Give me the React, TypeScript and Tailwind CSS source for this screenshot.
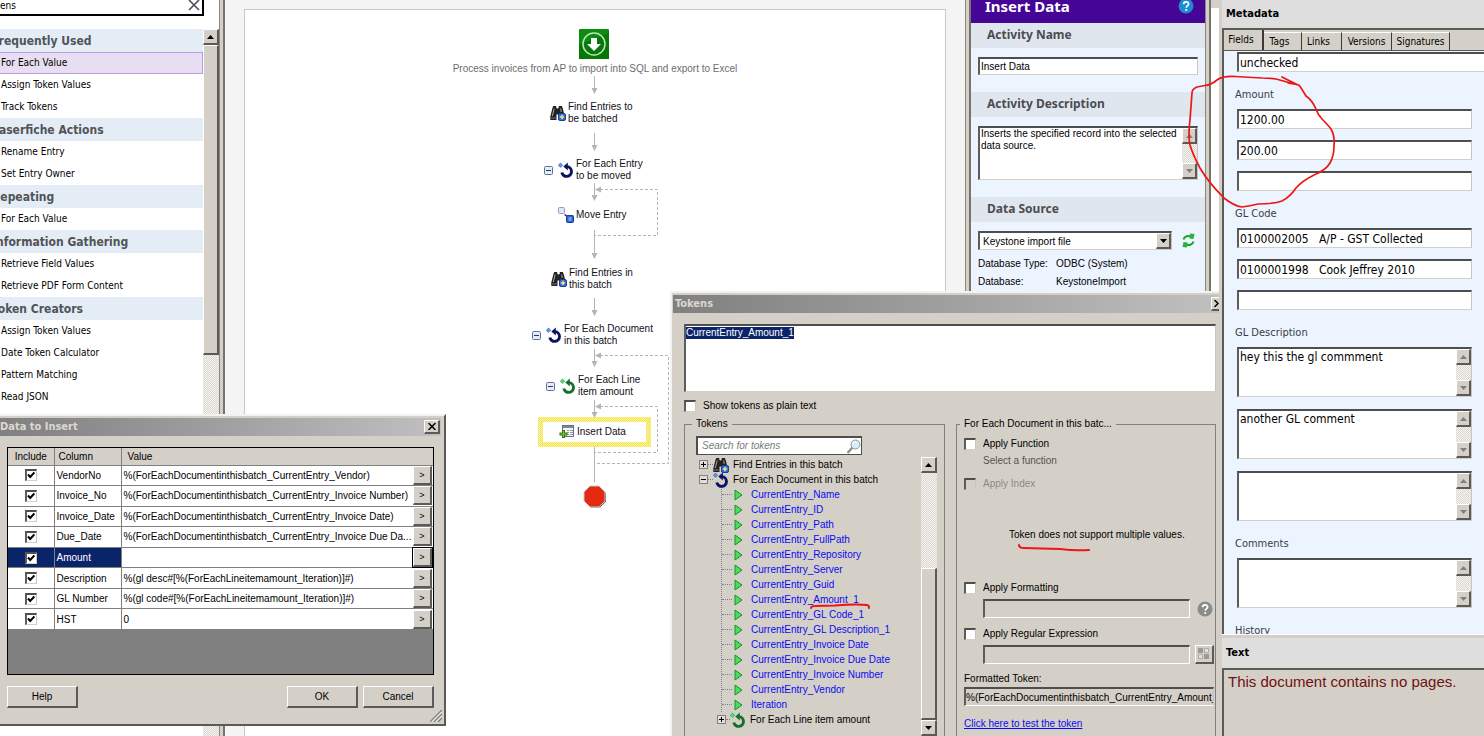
import type { ReactNode } from "react";

const categories = [
  { title: "Frequently Used", items: ["For Each Value", "Assign Token Values", "Track Tokens"] },
  { title: "Laserfiche Actions", items: ["Rename Entry", "Set Entry Owner"] },
  { title: "Repeating", items: ["For Each Value"] },
  { title: "Information Gathering", items: ["Retrieve Field Values", "Retrieve PDF Form Content"] },
  {
    title: "Token Creators",
    items: ["Assign Token Values", "Date Token Calculator", "Pattern Matching", "Read JSON", "Read XML"],
  },
];

const rows = [
  { column: "VendorNo", value: "%(ForEachDocumentinthisbatch_CurrentEntry_Vendor)" },
  { column: "Invoice_No", value: "%(ForEachDocumentinthisbatch_CurrentEntry_Invoice Number)" },
  { column: "Invoice_Date", value: "%(ForEachDocumentinthisbatch_CurrentEntry_Invoice Date)" },
  { column: "Due_Date", value: "%(ForEachDocumentinthisbatch_CurrentEntry_Invoice Due Da..." },
  { column: "Amount", value: "", selected: true },
  { column: "Description", value: "%(gl desc#[%(ForEachLineitemamount_Iteration)]#)" },
  { column: "GL Number", value: "%(gl code#[%(ForEachLineitemamount_Iteration)]#)" },
  { column: "HST", value: "0" },
];

const tokens = [
  "CurrentEntry_Name",
  "CurrentEntry_ID",
  "CurrentEntry_Path",
  "CurrentEntry_FullPath",
  "CurrentEntry_Repository",
  "CurrentEntry_Server",
  "CurrentEntry_Guid",
  "CurrentEntry_Amount_1",
  "CurrentEntry_GL Code_1",
  "CurrentEntry_GL Description_1",
  "CurrentEntry_Invoice Date",
  "CurrentEntry_Invoice Due Date",
  "CurrentEntry_Invoice Number",
  "CurrentEntry_Vendor",
  "Iteration",
];

const fieldGroups = [
  { label: "Amount", values: ["1200.00", "200.00", ""], multiline: false },
  { label: "GL Code", values: ["0100002005   A/P - GST Collected", "0100001998   Cook Jeffrey 2010", ""], multiline: false },
  { label: "GL Description", values: ["hey this the gl commment", "another GL comment", ""], multiline: true },
  { label: "Comments", values: [""], multiline: true },
];

const sunken = "border-t-2 border-l-2 border-r border-b border-t-[#4e4e4e] border-l-[#5c5c5c] border-r-[#c9c5bd] border-b-[#d4d0c8]";
const raised = "bg-[#d4d0c8] border-t border-l border-r-2 border-b-2 border-t-white border-l-white border-r-[#5c5a56] border-b-[#5c5a56]";
const dither = "bg-[repeating-conic-gradient(#d9d6cf_0_25%,#f6f5f2_0_50%)] bg-[length:2px_2px]";

function Arrow({ up, dim }: { up?: boolean; dim?: boolean }) {
  return (
    <svg width="7" height="4" viewBox="0 0 7 4" className={up ? "" : "rotate-180"}>
      <path d="M0 4 3.5 0 7 4Z" fill={dim ? "#808080" : "#000"} />
    </svg>
  );
}

function ScrollButton({ up, dim }: { up?: boolean; dim?: boolean }) {
  return (
    <button aria-label={up ? "Scroll up" : "Scroll down"} className={`flex h-4 w-full shrink-0 items-center justify-center ${raised}`}>
      <Arrow up={up} dim={dim} />
    </button>
  );
}

function MemoBox({ label, value, className }: { label: string; value: string; className: string }) {
  return (
    <div className={`flex bg-white ${sunken} ${className}`}>
      <textarea aria-label={label} readOnly value={value} className="min-w-0 flex-1 resize-none overflow-hidden px-px outline-none" />
      <div className={`flex w-[15px] flex-col justify-between ${dither}`}>
        <ScrollButton up dim />
        <ScrollButton dim />
      </div>
    </div>
  );
}

function Checkbox({ id, label, checked, disabled }: { id: string; label?: string; checked?: boolean; disabled?: boolean }) {
  return (
    <span className="grid size-3 shrink-0 place-items-center">
      <input
        id={id}
        type="checkbox"
        aria-label={label}
        defaultChecked={checked}
        disabled={disabled}
        className={`size-3 appearance-none [grid-area:1/1] ${sunken} ${disabled ? "bg-[#d4d0c8]" : "bg-white"}`}
      />
      {checked && (
        <svg width="8" height="8" viewBox="0 0 8 8" className="pointer-events-none [grid-area:1/1]">
          <path d="M1 3.5 3.2 6 7.4 1.4" fill="none" stroke="#000" strokeWidth="2" />
        </svg>
      )}
    </span>
  );
}

function Binoculars() {
  return (
    <svg width="16" height="16" viewBox="0 0 16 16" className="shrink-0">
      <path d="M3.200 1h3v1.500l.8 1h1l.8-1V1h3l1 2.500 2 8v3.500H8.500V9.500h-2V15H.3v-3.500l2-8Z" fill="#222" />
      <path d="M4.200 3.500 2.300 11" stroke="#a8a8a8" />
      <path d="M10.700 3.500l.5 3.500" stroke="#a8a8a8" />
      <path d="M1 13h4.800" stroke="#777" />
      <rect x="8.500" y="8.500" width="7" height="7" rx="1.500" fill="#2c6be0" stroke="#143fa0" />
      <path d="M12 9.800v4.400M9.800 12h4.400" stroke="#ffe25a" strokeWidth="1.500" />
    </svg>
  );
}

function LoopIcon({ green }: { green?: boolean }) {
  return (
    <svg width="16" height="16" viewBox="0 0 16 16" className="shrink-0">
      <path d="M9 4.600A4.900 4.900 0 1 1 3.800 10.500" fill="none" stroke={green ? "#15702c" : "#0b1260"} strokeWidth="2.900" />
      <path d="M5.300 4.600 9.800 .6v8Z" fill={green ? "#15702c" : "#0b1260"} />
      <path d="M2.500 1 4.700 3.200 2.500 5.400 .3 3.200Z" fill={green ? "#4ee06d" : "#5a95f2"} stroke={green ? "#1c9c3c" : "#2b5fc4"} strokeWidth=".6" />
    </svg>
  );
}

function CollapseBox() {
  return (
    <svg width="9" height="9" viewBox="0 0 9 9" className="shrink-0">
      <rect x=".5" y=".5" width="8" height="8" rx="1" fill="#e6ebf4" stroke="#5f7396" />
      <path d="M2 4.500h5" stroke="#1f3a74" />
    </svg>
  );
}

function TreeBox({ plus }: { plus?: boolean }) {
  return (
    <svg width="9" height="9" viewBox="0 0 9 9" className="shrink-0">
      <rect x=".5" y=".5" width="8" height="8" fill="#e2dfd9" stroke="#808080" />
      <path d={plus ? "M2 4.500h5M4.500 2v5" : "M2 4.500h5"} stroke="#000" />
    </svg>
  );
}

function QuestionBadge({ fill, size }: { fill: string; size: number }) {
  return (
    <svg width={size} height={size} viewBox="0 0 16 16" className="shrink-0">
      <circle cx="8" cy="8" r="7.500" fill={fill} />
      <path d="M5.600 6.200c0-3.200 5-3.100 5-.2 0 1.800-2.400 1.900-2.400 3.700" fill="none" stroke="#fff" strokeWidth="1.700" />
      <circle cx="8.200" cy="12" r="1.100" fill="#fff" />
    </svg>
  );
}

function ActivityList() {
  return (
    <aside className="flex w-[219px] shrink-0 flex-col overflow-hidden bg-white font-['DejaVu_Sans_Condensed','Noto_Sans',sans-serif] text-[10px] text-black">
      <div className="mr-[15px] flex h-4 shrink-0 items-center border-r-2 border-b-2 border-black">
        <input aria-label="Search activities" defaultValue="ens" className="min-w-0 flex-1 pb-1 outline-none" />
        <button aria-label="Clear search" className="pr-0.5 pb-1">
          <svg width="12" height="12" viewBox="0 0 12 12">
            <path d="M1 1 11 11M11 1 1 11" stroke="#4a4d60" strokeWidth="1.600" />
          </svg>
        </button>
      </div>
      <div className="mt-[13px] flex min-h-0 flex-1">
        <div className="min-w-0 flex-1 overflow-hidden">
          {categories.map((category) => (
            <section key={category.title}>
              <h2 className="-ml-2 h-[23px] bg-[#e4edf5] text-xs leading-6 font-bold whitespace-nowrap text-[#505458]">{category.title}</h2>
              <ul>
                {category.items.map((item) => (
                  <li
                    key={item}
                    className={`h-[22px] leading-5 whitespace-nowrap ${
                      category.title === "Frequently Used" && item === "For Each Value" ? "border border-[#bb9ae4] bg-[#e7def1]" : "border border-transparent"
                    } border-l-0 pl-px`}
                  >
                    {item}
                  </li>
                ))}
              </ul>
            </section>
          ))}
        </div>
        <div className={`flex w-4 flex-col ${dither}`}>
          <ScrollButton up />
          <div className={`h-[310px] shrink-0 ${raised}`} />
        </div>
      </div>
    </aside>
  );
}

function Splitter() {
  return <div className="w-[6px] shrink-0 border-r-2 border-l border-r-[#77746e] border-l-[#8a8781] bg-[#d4d0c8]" />;
}

function Node({ className, children }: { className: string; children: ReactNode }) {
  return <div className={`absolute flex items-center whitespace-nowrap ${className}`}>{children}</div>;
}

function Workflow() {
  return (
    <main className="min-w-0 flex-1 overflow-hidden bg-[#f4f4f4] px-[19px] pt-[9px]">
      <div className="h-full border-t border-r border-l border-[#c8c8c8] bg-white">
        <div className="relative mx-auto h-full w-[300px] text-[10px] leading-3 text-[#101018]">
          <svg width="300" height="520" viewBox="445 10 300 520" className="absolute top-0 left-0">
            <g fill="none" stroke="#b4b4b4">
              <path d="M594.500 76v14M594.500 133v14M594.500 183v14M594.500 230v25M594.500 298v14M594.500 349v14M594.500 400v14M594.500 446v36" />
              <path d="M600 189.500h57.500v46h-63M600 355.500h68.500v108h-74M600 406.500h57.500v46h-63" strokeDasharray="3 2" />
            </g>
            <path
              fill="#b4b4b4"
              d="M591.500 88h6l-3 6ZM591.500 145h6l-3 6ZM591.500 195h6l-3 6ZM591.500 253h6l-3 6ZM591.500 310h6l-3 6ZM591.500 361h6l-3 6ZM591.500 412h6l-3 6ZM595 189.500l6-3v6ZM595 355.500l6-3v6ZM595 406.500l6-3v6Z"
            />
            <path d="M591 487.500h9l6 6v8l-6 6h-9l-6-6v-8Z" fill="#555" />
            <path d="M590 486h9l6 6v9l-6 6h-9l-6-6v-9Z" fill="#e42b12" stroke="#c9c9c9" />
          </svg>

          <Node className="top-[19px] left-[134px]">
            <svg width="30" height="30" viewBox="0 0 30 30">
              <rect width="30" height="30" rx="1" fill="#0c8a12" />
              <path d="M0 30V16L30 4v26Z" fill="#067708" />
              <circle cx="15" cy="15" r="11" fill="none" stroke="#b9e4b5" strokeWidth="1.500" />
              <path d="M12 9h6v6h4l-7 7-7-7h4Z" fill="#fff" />
            </svg>
          </Node>
          <Node className="top-[53px] w-full justify-center text-[#6d6d6d]">
            Process invoices from AP to import into SQL and export to Excel
          </Node>
          <Node className="top-[91px] left-[105px] gap-0.5">
            <Binoculars />
            <span>Find Entries to<br />be batched</span>
          </Node>
          <Node className="top-[148px] left-[99px] gap-0.5">
            <CollapseBox />
            <span className="ml-[3px]">
              <LoopIcon />
            </span>
            <span>For Each Entry<br />to be moved</span>
          </Node>
          <Node className="top-[197px] left-[113px] gap-0.5">
            <svg width="16" height="16" viewBox="0 0 16 16">
              <rect x=".5" y=".5" width="6" height="6" rx="1" fill="#dfe6f5" stroke="#8c9cc4" />
              <path d="M6.500 7.500 9.500 9.500" stroke="#222a55" strokeWidth="1.500" />
              <rect x="8.500" y="8.500" width="7" height="7" rx="1" fill="#2d62da" stroke="#173d9c" />
              <path d="M10.500 11h3M10.500 13h3" stroke="#cfe0ff" />
            </svg>
            <span>Move Entry</span>
          </Node>
          <Node className="top-[257px] left-[106px] gap-0.5">
            <Binoculars />
            <span>Find Entries in<br />this batch</span>
          </Node>
          <Node className="top-[313px] left-[87px] gap-0.5">
            <CollapseBox />
            <span className="ml-[3px]">
              <LoopIcon />
            </span>
            <span>For Each Document<br />in this batch</span>
          </Node>
          <Node className="top-[364px] left-[101px] gap-0.5">
            <CollapseBox />
            <span className="ml-[3px]">
              <LoopIcon green />
            </span>
            <span>For Each Line<br />item amount</span>
          </Node>
          <Node className="top-[407px] left-[93px] h-[30px] w-[113px] bg-[repeating-conic-gradient(#f5e14a_0_25%,#fbf3a6_0_50%)] bg-[length:2px_2px] p-[5px]">
            <div className="flex h-full w-full items-center gap-0.5 bg-white pl-4">
              <svg width="16" height="14" viewBox="0 0 16 14">
                <rect x="3.500" y=".5" width="11" height="11" fill="#f4f4f4" stroke="#6a7080" />
                <path d="M4 2h10" stroke="#7b8698" strokeWidth="2" />
                <path d="M8 5.500h2M11 5.500h3M8 7.500h2M11 7.500h3M8 9.500h2M11 9.500h3" stroke="#9298a4" />
                <path d="M4.500 5v8M.5 9h8" stroke="#2f7a12" strokeWidth="3" />
                <path d="M4.500 6v6M1.500 9h6" stroke="#7fc142" />
              </svg>
              <span>Insert Data</span>
            </div>
          </Node>
        </div>
      </div>
    </main>
  );
}

function SectionTitle({ children }: { children: ReactNode }) {
  return (
    <h3 className="h-[25px] bg-[#dfe6ee] pl-4 font-['Noto_Sans','Open_Sans',sans-serif] text-xs leading-6 font-bold text-[#4c4c50]">
      {children}
    </h3>
  );
}

function ActivityPanel() {
  return (
    <aside className="w-[234px] shrink-0 overflow-hidden bg-[#ebf4ff] text-[10px]">
      <header className="flex h-[23px] items-start justify-between bg-[#450696] pr-[11px] pl-[14px]">
        <h2 className="-mt-1 font-['Noto_Sans','Open_Sans',sans-serif] text-[15px] leading-5 font-bold text-white">Insert Data</h2>
        <button aria-label="Help" className="-mt-0.5">
          <QuestionBadge fill="#1c8bd2" size={16} />
        </button>
      </header>
      <SectionTitle>Activity Name</SectionTitle>
      <div className="px-[7px] pt-[9px] pb-[17px]">
        <input aria-label="Activity Name" defaultValue="Insert Data" className={`block h-[18px] w-full bg-white px-px outline-none ${sunken}`} />
      </div>
      <SectionTitle>Activity Description</SectionTitle>
      <div className="px-[7px] pt-[9px] pb-[17px] leading-3">
        <MemoBox label="Activity Description" value="Inserts the specified record into the selected data source." className="h-[54px]" />
      </div>
      <SectionTitle>Data Source</SectionTitle>
      <div className="flex items-center gap-2.5 px-[7px] pt-[9px]">
        <div className={`relative flex w-[194px] bg-white ${sunken}`}>
          <select aria-label="Data Source" className="h-4 w-full appearance-none pl-[3px] outline-none">
            <option>Keystone import file</option>
          </select>
          <span className={`pointer-events-none absolute top-0 right-0 flex h-4 w-[15px] items-center justify-center ${raised}`}>
            <Arrow />
          </span>
        </div>
        <button aria-label="Refresh">
          <svg width="13" height="15" viewBox="0 0 13 15">
            <path d="M1.500 6.500C2.500 3 6 2.500 9 3.500M11.500 8.500C10.500 12 7 12.500 4 11.500" fill="none" stroke="#1ca32c" strokeWidth="2" />
            <path d="M8 .5l4.500.5L11.500 6 7.500 5.500ZM5 14.500 .5 14 1.500 9 5.500 9.500Z" fill="#24b636" />
          </svg>
        </button>
      </div>
      <dl className="grid grid-cols-[78px_1fr] px-[7px] pt-[5px] leading-[18px]">
        <dt>Database Type:</dt>
        <dd>ODBC (System)</dd>
        <dt>Database:</dt>
        <dd>KeystoneImport</dd>
      </dl>
    </aside>
  );
}

function MetadataPanel() {
  return (
    <aside className="flex w-[265px] shrink-0 flex-col overflow-hidden border-l-3 border-[#d4d0c8] bg-[#dedede] font-['DejaVu_Sans_Condensed','Noto_Sans',sans-serif] text-[11px]">
      <h2 className="h-7 shrink-0 pl-1 text-[11px] leading-7 font-bold">Metadata</h2>
      <div className="flex h-[23px] shrink-0 items-end border-t-2 border-l-2 border-[#5c5a56] border-b bg-[#d4d0c8] text-[10px]">
        <button className="h-full w-10 border-r-2 border-[#3b3a37] pr-1 pb-0.5">Fields</button>
        <button className="h-[18px] w-[38px] border-t border-r border-t-white border-r-[#3b3a37] pr-1.5">Tags</button>
        <button className="h-[18px] w-10 border-t border-r border-t-white border-r-[#3b3a37] pr-1.5">Links</button>
        <button className="h-[18px] w-[50px] border-t border-r border-t-white border-r-[#3b3a37]">Versions</button>
        <button className="h-[18px] w-[58px] border-t border-r border-t-white border-r-[#3b3a37]">Signatures</button>
      </div>
      <div className="h-[583px] shrink-0 overflow-hidden border-l-2 border-[#5c5a56] bg-[#ebf4ff] pt-px pl-[11px] text-xs leading-4">
        <input aria-label="Status" defaultValue="unchecked" className={`ml-0.5 block h-5 w-full bg-white px-px outline-none ${sunken}`} />
        {fieldGroups.map((group) => (
          <section key={group.label} className="pt-[13px] pr-3">
            <h3 className="mb-1 h-5 text-[11px] leading-5 text-[#3a3d44]">{group.label}</h3>
            <div className={`ml-0.5 flex flex-col ${group.multiline ? "gap-3" : "gap-[11px]"}`}>
              {group.values.map((value, i) =>
                group.multiline ? (
                  <MemoBox key={i} label={`${group.label} ${i + 1}`} value={value} className="h-[50px]" />
                ) : (
                  <input
                    key={i}
                    aria-label={`${group.label} ${i + 1}`}
                    defaultValue={value}
                    className={`h-5 w-full bg-white px-px whitespace-pre outline-none ${sunken}`}
                  />
                )
              )}
            </div>
          </section>
        ))}
        <h3 className="mt-[13px] h-5 text-[11px] leading-5 text-[#3a3d44]">History</h3>
      </div>
      <div className="h-1 shrink-0 border-t border-white bg-[#d4d0c8]" />
      <h2 className="h-[30px] shrink-0 pl-1 text-[11px] leading-[30px] font-bold">Text</h2>
      <p className="flex-1 border-t-2 border-l-2 border-[#5c5a56] bg-[#d4d0c8] pl-1 font-['Liberation_Sans',Arial,sans-serif] text-[15px] leading-6 text-[#701010]">
        This document contains no pages.
      </p>
    </aside>
  );
}

function DataToInsert() {
  return (
    <div role="dialog" aria-label="Data to Insert" className="absolute top-[414px] left-0 w-[446px] border-t-2 border-r-2 border-b-2 border-t-[#f4f2ee] border-r-[#5c5a56] border-b-[#5c5a56] bg-[#d4d0c8] pt-0.5 text-[10px]">
      <header className="mr-[3px] flex h-[18px] items-center justify-between bg-linear-to-r from-[#808080] to-[#c0c0c0] pr-px">
        <h2 className="font-['DejaVu_Sans_Condensed','Noto_Sans',sans-serif] text-[11px] font-bold text-[#dcd8d0]">Data to Insert</h2>
        <button aria-label="Close" className={`flex h-[14px] w-4 items-center justify-center ${raised}`}>
          <svg width="8" height="7" viewBox="0 0 8 7">
            <path d="M.5 0 7.500 7M7.500 0 .5 7" stroke="#000" strokeWidth="1.500" />
          </svg>
        </button>
      </header>
      <div className="mt-[11px] mr-[10px] ml-[7px] h-[228px] border border-black bg-[#808080]">
        <table className="h-[182px] w-full table-fixed border-collapse bg-white text-left">
          <colgroup>
            <col className="w-[46px]" />
            <col className="w-[67px]" />
            <col />
            <col className="w-5" />
          </colgroup>
          <thead>
            <tr className="h-[17px] border-b border-[#808080] bg-[#d4d0c8]">
              <th className="border-r border-[#808080] p-0 text-center font-normal">Include</th>
              <th className="border-r border-[#808080] p-0 pl-1 font-normal">Column</th>
              <th colSpan={2} className="p-0 pl-1.5 font-normal">Value</th>
            </tr>
          </thead>
          <tbody>
            {rows.map((row) => (
              <tr key={row.column} className="border-b border-[#808080]">
                <td className={`border-r border-[#808080] p-0 ${row.selected ? "bg-[#0a246a]" : ""}`}>
                  <div className="flex justify-center">
                    <Checkbox id={`include-${row.column}`} label={`Include ${row.column}`} checked />
                  </div>
                </td>
                <td className={`border-r border-[#808080] p-0 pl-0.5 ${row.selected ? "bg-[#0a246a] text-white" : ""}`}>{row.column}</td>
                <td className="p-0 pl-0.5 whitespace-nowrap">{row.value}</td>
                <td className="p-0">
                  <button
                    aria-label={`Pick token for ${row.column}`}
                    className={`block h-[19px] w-[19px] text-[9px] leading-3 ${raised} ${row.selected ? "outline outline-black" : ""}`}
                  >
                    &gt;
                  </button>
                </td>
              </tr>
            ))}
          </tbody>
        </table>
      </div>
      <footer className="mt-[11px] mr-[10px] mb-4 ml-[7px] flex gap-[5px]">
        <button className={`mr-auto h-[22px] w-[71px] ${raised}`}>Help</button>
        <button className={`h-[22px] w-[71px] ${raised}`}>OK</button>
        <button className={`h-[22px] w-[71px] ${raised}`}>Cancel</button>
      </footer>
      <svg width="12" height="12" viewBox="0 0 12 12" className="absolute right-0.5 bottom-0.5">
        <path d="M0 12 12 0M4 12 12 4M8 12 12 8" stroke="#808080" strokeWidth="1.500" />
        <path d="M1.500 12 12 1.500M5.500 12 12 5.500" stroke="#fff" strokeWidth=".8" />
      </svg>
    </div>
  );
}

function OptionRow({ id, label, disabled }: { id: string; label: string; disabled?: boolean }) {
  return (
    <div className="flex h-[14px] items-center gap-[7px]">
      <Checkbox id={id} disabled={disabled} />
      <label htmlFor={id} className={disabled ? "text-[#8d8a84]" : ""}>{label}</label>
    </div>
  );
}

function TokensDialog() {
  return (
    <div role="dialog" aria-label="Tokens" className="absolute top-[291px] right-[265px] bottom-0 flex w-[549px] flex-col overflow-hidden border-t-2 border-l-2 border-[#f4f2ee] bg-[#d4d0c8] text-[10px] leading-3">
      <header className="mt-0.5 ml-px flex h-[18px] shrink-0 items-center justify-between bg-linear-to-r from-[#808080] to-[#c0c0c0] pl-0.5">
        <h2 className="font-['DejaVu_Sans_Condensed','Noto_Sans',sans-serif] text-[11px] font-bold text-[#dcd8d0]">Tokens</h2>
        <button aria-label="Close" className="flex h-[14px] w-2 items-center justify-end overflow-hidden border-t border-b-2 border-l border-t-white border-b-[#5c5a56] border-l-white bg-[#d4d0c8]">
          <svg width="5" height="7" viewBox="0 0 5 7">
            <path d="M.5 0 4 3.500.5 7" fill="none" stroke="#000" strokeWidth="1.500" />
          </svg>
        </button>
      </header>
      <div className="mt-[11px] mr-[3px] ml-3 shrink-0">
        <div className={`h-[68px] bg-white pt-px ${sunken}`}>
          <span className="block h-3 w-fit bg-[#0a246a] text-white">CurrentEntry_Amount_1</span>
        </div>
        <div className="mt-2 flex items-center gap-[7px]">
          <Checkbox id="plain" />
          <label htmlFor="plain">Show tokens as plain text</label>
        </div>
      </div>
      <div className="mt-1.5 mr-[3px] ml-3 flex min-h-0 flex-1 gap-[11px]">
        <fieldset className="flex w-[261px] shrink-0 flex-col border-t border-r border-l border-[#808080] pt-1.5 pl-[11px]">
          <legend className="-ml-1 px-1">Tokens</legend>
          <div className="flex h-[19px] w-[166px] shrink-0 items-center border-t-2 border-r border-b border-l-2 border-[#4e4e4e] bg-white pl-1">
            <input aria-label="Search for tokens" placeholder="Search for tokens" className="min-w-0 flex-1 italic outline-none placeholder:text-[#7a7a7a]" />
            <svg width="15" height="15" viewBox="0 0 15 15">
              <path d="M6.500 8.500 1.500 14" stroke="#8a8a8a" strokeWidth="2.200" />
              <circle cx="9.500" cy="5.500" r="4.500" fill="#dcecf9" stroke="#8a97a6" />
              <path d="M7 4.500Q8 2.800 10 2.800" fill="none" stroke="#fff" strokeWidth="1.300" />
            </svg>
          </div>
          <div className="mt-0.5 flex min-h-0 flex-1">
            <div className="min-w-0 flex-1 overflow-hidden leading-[15px] whitespace-nowrap">
              <div className="ml-[3px] flex h-[15px] items-center">
                <TreeBox plus />
                <span className="w-[5px] border-t border-dotted border-[#808080]" />
                <Binoculars />
                <span className="ml-1">Find Entries in this batch</span>
              </div>
              <div className="ml-[3px] flex h-[15px] items-center">
                <TreeBox />
                <span className="w-[5px] border-t border-dotted border-[#808080]" />
                <LoopIcon />
                <span className="ml-1">For Each Document in this batch</span>
              </div>
              <ul className="ml-[25px] border-l border-dotted border-[#808080]">
                {tokens.map((token) => (
                  <li key={token} className="flex h-[15px] items-center text-[#0a0af0]">
                    <span className="mr-0.5 w-[10px] border-t border-dotted border-[#808080]" />
                    <svg width="9" height="12" viewBox="0 0 9 12">
                      <path d="M1 1 8 6 1 11Z" fill="#4fdc5d" stroke="#15912a" />
                    </svg>
                    <span className="ml-2">{token}</span>
                  </li>
                ))}
              </ul>
              <div className="ml-[21px] flex h-[15px] items-center">
                <TreeBox plus />
                <span className="w-1 border-t border-dotted border-[#808080]" />
                <LoopIcon green />
                <span className="ml-1">For Each Line item amount</span>
              </div>
            </div>
            <div className={`mr-[7px] flex w-4 flex-col ${dither}`}>
              <ScrollButton up />
              <div className="flex-1" />
              <div className={`h-[152px] shrink-0 ${raised}`} />
              <ScrollButton />
            </div>
          </div>
        </fieldset>
        <fieldset className="min-w-0 flex-1 border-t border-r border-l border-[#808080] pt-[7px] pl-[7px]">
          <legend className="-ml-1 px-1">For Each Document in this batc...</legend>
          <OptionRow id="fn" label="Apply Function" />
          <p className="mt-1 ml-[19px] text-[#55534f]">Select a function</p>
          <div className="mt-2.5">
            <OptionRow id="index" label="Apply Index" disabled />
          </div>
          <p className="mt-[38px] ml-[45px]">Token does not support multiple values.</p>
          <div className="mt-10">
            <OptionRow id="formatting" label="Apply Formatting" />
          </div>
          <div className="mt-1 flex items-center gap-[7px] pl-[19px]">
            <input aria-label="Format" disabled className={`h-[19px] w-[207px] ${sunken} border-r-white border-b-white`} />
            <QuestionBadge fill="#8b8b8b" size={16} />
          </div>
          <div className="mt-[9px]">
            <OptionRow id="regex" label="Apply Regular Expression" />
          </div>
          <div className="mt-1 flex items-center gap-[5px] pl-[19px]">
            <input aria-label="Regular expression" disabled className={`h-[19px] w-[207px] ${sunken} border-r-white border-b-white`} />
            <button aria-label="Expression builder" className={`flex size-[19px] items-center justify-center ${raised}`}>
              <svg width="12" height="12" viewBox="0 0 12 12">
                <path d="M0 0h5v5H0ZM6 6h5v5H6Z" fill="#9a9a9a" />
                <path d="M6.500.5h4v4h-4ZM.5 6.500h4v4h-4Z" fill="#e4e2dd" stroke="#aaa" />
              </svg>
            </button>
          </div>
          <label htmlFor="formatted" className="mt-[7px] block h-4 leading-4">Formatted Token:</label>
          <input
            id="formatted"
            readOnly
            value="%(ForEachDocumentinthisbatch_CurrentEntry_Amount_"
            className={`block h-[19px] w-[250px] bg-[#d4d0c8] outline-none ${sunken} border-b-white`}
          />
          <a href="#test" className="mt-3 block w-fit text-[#0a0af0] underline">Click here to test the token</a>
        </fieldset>
      </div>
    </div>
  );
}

// Red pen marks drawn over the windows
function PenMarks() {
  return (
    <svg width="700" height="736" viewBox="784 0 700 736" className="pointer-events-none absolute top-0 right-0" fill="none" stroke="#f01414" strokeLinecap="round" strokeLinejoin="round">
      <path
        strokeWidth="1.700"
        d="M1282 77 1290 81 1298 85 1276 79Q1270 78 1262 78L1235 76.500Q1222 76 1217 80 1211 85 1205 85.500L1197 87Q1192 89 1192 93L1190 120Q1188 135 1190 145 1193 155 1200 168 1208 182 1224 198 1234 206 1242 207 1250 206 1258 204 1274 204 1282 201 1290 197 1296 188 1302 181 1314 175 1326 170 1330 163 1334 156 1334 146 1335 136 1331 129 1328 125 1322 119 1318 115 1316 109 1312 100 1306 96 1302 89 1299 85L1288 83"
      />
      <path strokeWidth="2" d="M811 608Q811 606 815 606L835 605.500Q855 604 867 605 869 605 869 608" />
      <path strokeWidth="2" d="M1019 545Q1019 548 1024 548L1060 549Q1075 551 1089 550" />
    </svg>
  );
}

export default function App() {
  return (
    <div className="relative flex h-screen w-full overflow-hidden bg-white font-['Liberation_Sans',Arial,sans-serif] text-black">
      <ActivityList />
      <Splitter />
      <Workflow />
      <Splitter />
      <ActivityPanel />
      <Splitter />
      <div className="w-2 shrink-0 border-t-8 border-[#d4d0c8] bg-white" />
      <MetadataPanel />
      <DataToInsert />
      <TokensDialog />
      <PenMarks />
    </div>
  );
}
